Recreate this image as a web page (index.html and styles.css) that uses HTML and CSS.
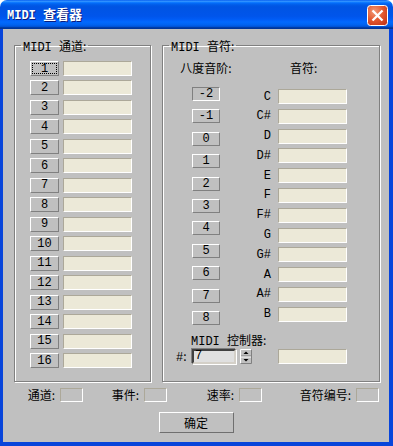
FILE: index.html
```html
<!DOCTYPE html>
<html lang="zh">
<head>
	<meta charset="UTF-8">
	<title>MIDI 查看器</title>
	<link rel="stylesheet" href="styles.css">
</head>
<body>
	<div class="window">
		<header class="titlebar">
			<span class="title"><span class="lat">MIDI </span>查看器</span>
			<span class="close">
				<svg width="21" height="21" viewBox="0 0 21 21">
					<defs>
						<radialGradient id="cg" cx="35%" cy="30%" r="80%">
							<stop offset="0" stop-color="#f29a78"/>
							<stop offset=".55" stop-color="#e2582f"/>
							<stop offset="1" stop-color="#c5381a"/>
						</radialGradient>
					</defs>
					<rect x=".5" y=".5" width="20" height="20" rx="3" fill="url(#cg)" stroke="#fff"/>
					<path d="M6.3 6.3l8.4 8.4M14.7 6.3l-8.4 8.4" stroke="#fff" stroke-width="2.3" stroke-linecap="square"/>
				</svg>
			</span>
		</header>

		<main class="client">
			<div class="groups">
				<!-- canales -->
				<fieldset class="group channels">
					<legend><span class="lat">MIDI </span>通道:</legend>
					<div class="inner">
						<div class="row"><button class="btn focus">1</button><span class="field"></span></div>
						<div class="row"><button class="btn">2</button><span class="field"></span></div>
						<div class="row"><button class="btn">3</button><span class="field"></span></div>
						<div class="row"><button class="btn">4</button><span class="field"></span></div>
						<div class="row"><button class="btn">5</button><span class="field"></span></div>
						<div class="row"><button class="btn">6</button><span class="field"></span></div>
						<div class="row"><button class="btn">7</button><span class="field"></span></div>
						<div class="row"><button class="btn">8</button><span class="field"></span></div>
						<div class="row"><button class="btn">9</button><span class="field"></span></div>
						<div class="row"><button class="btn">10</button><span class="field"></span></div>
						<div class="row"><button class="btn">11</button><span class="field"></span></div>
						<div class="row"><button class="btn">12</button><span class="field"></span></div>
						<div class="row"><button class="btn">13</button><span class="field"></span></div>
						<div class="row"><button class="btn">14</button><span class="field"></span></div>
						<div class="row"><button class="btn">15</button><span class="field"></span></div>
						<div class="row"><button class="btn">16</button><span class="field"></span></div>
					</div>
				</fieldset>

				<!-- notas -->
				<fieldset class="group notes">
					<legend><span class="lat">MIDI </span>音符:</legend>
					<div class="inner">
						<div class="cols">
							<div class="octaves">
								<div class="head">八度音阶:</div>
								<div class="octlist">
									<button class="oct pressed">-2</button>
									<button class="oct">-1</button>
									<button class="oct">0</button>
									<button class="oct">1</button>
									<button class="oct">2</button>
									<button class="oct">3</button>
									<button class="oct">4</button>
									<button class="oct">5</button>
									<button class="oct">6</button>
									<button class="oct">7</button>
									<button class="oct">8</button>
								</div>
							</div>
							<div class="keys">
								<div class="head">音符:</div>
								<div class="keylist">
									<div class="key"><span class="name">C</span><span class="field"></span></div>
									<div class="key"><span class="name">C#</span><span class="field"></span></div>
									<div class="key"><span class="name">D</span><span class="field"></span></div>
									<div class="key"><span class="name">D#</span><span class="field"></span></div>
									<div class="key"><span class="name">E</span><span class="field"></span></div>
									<div class="key"><span class="name">F</span><span class="field"></span></div>
									<div class="key"><span class="name">F#</span><span class="field"></span></div>
									<div class="key"><span class="name">G</span><span class="field"></span></div>
									<div class="key"><span class="name">G#</span><span class="field"></span></div>
									<div class="key"><span class="name">A</span><span class="field"></span></div>
									<div class="key"><span class="name">A#</span><span class="field"></span></div>
									<div class="key"><span class="name">B</span><span class="field"></span></div>
								</div>
							</div>
						</div>
						<div class="ctrl">
							<div class="ctrl-label"><span class="lat">MIDI </span>控制器:</div>
							<div class="ctrl-row">
								<span class="hash"><span class="lat">#</span>:</span>
								<span class="edit lat">7</span>
								<span class="spin">
									<svg width="12" height="15" viewBox="0 0 12 15">
										<rect width="12" height="15" fill="#c0c0c0"/>
										<path d="M.5 14.5V.5h11" fill="none" stroke="#fff"/>
										<path d="M.5 14.5h11V.5" fill="none" stroke="#808080"/>
										<path d="M1 7h10" stroke="#808080"/>
										<path d="M1 8h10" stroke="#fff"/>
										<path d="M6 2.5L3.5 5h5z" fill="#000"/>
										<path d="M3.5 10h5L6 12.5z" fill="#000"/>
									</svg>
								</span>
								<span class="field wide"></span>
							</div>
						</div>
					</div>
				</fieldset>
			</div>

			<div class="status">
				<div class="stat"><span>通道:</span><span class="box"></span></div>
				<div class="stat"><span>事件:</span><span class="box"></span></div>
				<div class="stat"><span>速率:</span><span class="box"></span></div>
				<div class="stat"><span>音符编号:</span><span class="box"></span></div>
			</div>

			<div class="actions">
				<button class="ok">确定</button>
			</div>
		</main>
	</div>
</body>
</html>
```

FILE: styles.css
```css
/* base */
* {
	box-sizing: border-box;
}
body {
	margin: 0px;
	background: #fff;
	color: #000;
	font: 12px/14px "Noto Sans CJK SC", sans-serif;
}
.lat {
	font-family: "Liberation Mono", monospace;
	font-size: 12px;
	white-space: pre;
}

/* window */
.window {
	display: flex;
	flex-direction: column;
	height: 446px;
	width: 393px;
}
.titlebar {
	align-items: center;
	background: linear-gradient(to bottom, #0058ee 0%, #3593ff 4%, #288eff 6%, #127dff 8%, #036ffc 10%, #0262ee 14%, #0057e5 20%, #0054e3 24%, #0055eb 56%, #005bf5 66%, #026afe 76%, #0062ef 86%, #0052d6 92%, #0040ab 94%, #003092 100%);
	border-radius: 7px 7px 0px 0px;
	display: flex;
	flex: none;
	height: 29px;
	justify-content: space-between;
	padding: 0px 5px 0px 7px;
}
.title {
	color: #fff;
	font-size: 13px;
	font-weight: bold;
	text-shadow: 1px 1px #0a1d7c;
}
.title .lat {
	font-size: 12px;
}
.close {
	display: block;
	height: 21px;
	margin-top: 2px;
	width: 21px;
}
.close svg {
	display: block;
}
.client {
	background: #c0c0c0;
	border: solid #0845db;
	border-width: 0px 4px 4px 3px;
	flex: 1;
}

/* group boxes */
.groups {
	display: flex;
	gap: 11px;
	padding: 10px 0px 0px 11px;
}
.group {
	border: 1px solid #808080;
	box-shadow: inset 1px 1px #fff, 1px 1px #fff;
	margin: 0px;
	min-width: 0px;
	padding: 0px;
}
.group legend {
	height: 13px;
	line-height: 13px;
	margin-left: 6px;
	padding: 0px 2px;
}
.group legend .lat {
	line-height: 13px;
}
.channels {
	width: 137px;
}
.notes {
	width: 218px;
}

/* fields and buttons */
.field {
	background: #ece9d8;
	border: 1px solid;
	border-color: #aca899 #fff #fff #aca899;
	display: block;
	height: 15px;
	width: 69px;
}
.btn, .oct {
	background: #c0c0c0;
	border: 1px solid;
	border-color: #fff #808080 #808080 #fff;
	color: #000;
	font-family: "Liberation Mono", monospace;
	font-size: 12px;
	line-height: 12px;
	padding: 0px;
}
.btn {
	height: 15px;
	width: 29px;
}
.btn.focus {
	outline: 1px dotted #000;
	outline-offset: -3px;
}

/* channels */
.channels .inner {
	display: flex;
	flex-direction: column;
	gap: 4.47px;
	padding: 9px 0px 13px 15px;
}
.row {
	display: flex;
	gap: 4px;
}

/* notes */
.notes .inner {
	padding: 9px 0px 0px 0px;
}
.cols {
	display: flex;
}
.head {
	height: 14px;
	white-space: nowrap;
}
.octaves {
	align-items: center;
	display: flex;
	flex-direction: column;
	margin-left: 18px;
	width: 50px;
}
.octlist {
	display: flex;
	flex-direction: column;
	gap: 8.4px;
	margin-top: 12px;
}
.oct {
	height: 14px;
	width: 28px;
}
.oct.pressed {
	border-color: #808080 #fff #fff #808080;
}
.keys {
	margin-left: 19px;
}
.keys .head {
	margin-left: 40px;
}
.keylist {
	display: flex;
	flex-direction: column;
	gap: 4.8px;
	margin-top: 14px;
}
.key {
	align-items: center;
	display: flex;
}
.key .name {
	font-family: "Liberation Mono", monospace;
	font-size: 12px;
	margin-right: 7px;
	text-align: right;
	width: 21px;
}

/* controller */
.ctrl {
	margin-top: 8px;
}
.ctrl-label {
	height: 14px;
	margin-left: 28px;
}
.ctrl-row {
	align-items: center;
	display: flex;
	margin-top: 2px;
}
.hash {
	margin-left: 13px;
	width: 16px;
}
.edit {
	background: #e0e0e0;
	border: 2px solid;
	border-color: #404040 #d4d0c8 #d4d0c8 #404040;
	box-shadow: -1px -1px #808080, 1px 1px #fff;
	height: 15px;
	line-height: 11px;
	padding-left: 1px;
	width: 44px;
}
.spin {
	display: block;
	height: 15px;
	margin-left: 4px;
	width: 12px;
}
.spin svg {
	display: block;
}
.field.wide {
	margin-left: 26px;
}

/* status row */
.status {
	display: grid;
	grid-template-columns: 80px 84px 95px 117px;
	margin-top: 6px;
}
.stat {
	align-items: center;
	display: flex;
	gap: 5px;
	justify-self: end;
}
.stat .box {
	border: 1px solid;
	border-color: #aca899 #fff #fff #aca899;
	display: block;
	height: 14px;
	width: 23px;
}

/* ok */
.actions {
	display: flex;
	justify-content: center;
	margin-top: 10px;
}
.ok {
	background: #c0c0c0;
	border: 1px solid;
	border-color: #fff #6f6f6f #6f6f6f #fff;
	color: #000;
	font: 12px/14px "Noto Sans CJK SC", sans-serif;
	height: 21px;
	padding: 0px;
	width: 75px;
}
```
